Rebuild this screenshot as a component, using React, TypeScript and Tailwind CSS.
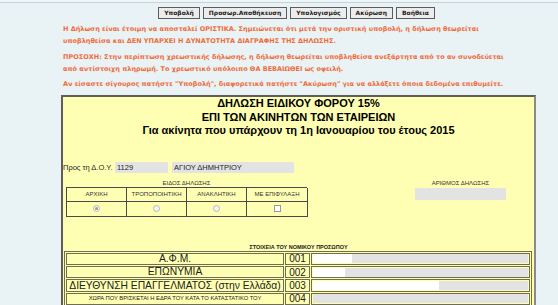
// Προεπισκόπηση οριστικής υποβολής δήλωσης ειδικού φόρου 15%

const sans = "font-['Liberation_Sans',Arial,sans-serif]";
const verdana = "font-['DejaVu_Sans',Verdana,sans-serif]";

const buttons = ['Υποβολή', 'Προσωρ.Αποθήκευση', 'Υπολογισμός', 'Ακύρωση', 'Βοήθεια'];

const kinds = ['ΑΡΧΙΚΗ', 'ΤΡΟΠΟΠΟΙΗΤΙΚΗ', 'ΑΝΑΚΛΗΤΙΚΗ', 'ΜΕ ΕΠΙΦΥΛΑΞΗ'];

const rows = [
  { label: 'Α.Φ.Μ.', code: '001', filled: 39, small: false },
  { label: 'ΕΠΩΝΥΜΙΑ', code: '002', filled: 32, small: false },
  { label: 'ΔΙΕΥΘΥΝΣΗ ΕΠΑΓΓΕΛΜΑΤΟΣ (στην Ελλάδα)', code: '003', filled: 126, small: false },
  { label: 'ΧΩΡΑ ΠΟΥ ΒΡΙΣΚΕΤΑΙ Η ΕΔΡΑ ΤΟΥ ΚΑΤΑ ΤΟ ΚΑΤΑΣΤΑΤΙΚΟ ΤΟΥ', code: '004', filled: 0, small: true },
];

function Radio({ checked }: { checked?: boolean }) {
  return (
    <span className="flex h-[7px] w-[7px] items-center justify-center rounded-full border border-[#b8b8b8] bg-[#f4f4f4]">
      {checked && <span className="h-[3px] w-[3px] rounded-full bg-[#9a9a9a]" />}
    </span>
  );
}

export default function App() {
  return (
    <div className="min-h-screen bg-[#e9f3f5]">
      <div className="h-[2px] bg-[#eef6f8]" />
      <div className="h-px bg-[#c4d3db]" />

      <div className="ml-[61px] w-[475px]">
        {/* κουμπιά ενεργειών */}
        <div className="mt-[4px] flex justify-center gap-[3px] pr-[4px]">
          {buttons.map((b) => (
            <button
              key={b}
              className={`${verdana} h-[12px] border border-[#5c5c5c] bg-[#ececec] px-[5px] text-[6px] font-bold leading-[10px] text-[#222]`}
            >
              {b}
            </button>
          ))}
        </div>

        {/* προειδοποιήσεις */}
        <div className={`${verdana} mt-[4px] pl-[2px] text-[6.5px] font-bold leading-[12px] text-[#ee6d3c]`}>
          <p>
            Η Δήλωση είναι έτοιμη να αποσταλεί ΟΡΙΣΤΙΚΑ. Σημειώνεται ότι μετά την οριστική υποβολή, η δήλωση θεωρείται
            <br />
            υποβληθείσα και ΔΕΝ ΥΠΑΡΧΕΙ Η ΔΥΝΑΤΟΤΗΤΑ ΔΙΑΓΡΑΦΗΣ ΤΗΣ ΔΗΛΩΣΗΣ.
          </p>
          <p className="mt-[4px]">
            ΠΡΟΣΟΧΗ: Στην περίπτωση χρεωστικής δήλωσης, η δήλωση θεωρείται υποβληθείσα ανεξάρτητα από το αν συνοδεύεται
            <br />
            από αντίστοιχη πληρωμή. Το χρεωστικό υπόλοιπο ΘΑ ΒΕΒΑΙΩΘΕΙ ως οφειλή.
          </p>
          <p className="mt-[3px]">
            Αν είσαστε σίγουρος πατήστε "Υποβολή", διαφορετικά πατήστε "Ακύρωση" για να αλλάξετε όποια δεδομένα επιθυμείτε.
          </p>
        </div>

        {/* φόρμα δήλωσης */}
        <div className="mt-[5px] h-[260px] border-2 border-[#5e5e5e] border-r-[#8a8a8a] bg-[#ffffb3]">
          <div className={`${sans} text-center text-[11px] font-bold leading-[13.5px] text-black`}>
            <div>ΔΗΛΩΣΗ ΕΙΔΙΚΟΥ ΦΟΡΟΥ 15%</div>
            <div>ΕΠΙ ΤΩΝ ΑΚΙΝΗΤΩΝ ΤΩΝ ΕΤΑΙΡΕΙΩΝ</div>
            <div>Για ακίνητα που υπάρχουν τη 1η Ιανουαρίου του έτους 2015</div>
          </div>

          <div className={`${sans} mt-[24px] flex items-center text-[7.5px] text-[#222]`}>
            <span className="w-[52px]">Προς τη Δ.Ο.Υ.</span>
            <span className="flex h-[11px] w-[53px] items-center bg-[#e3e3e3] px-[2px]">1129</span>
            <span className="ml-[4px] flex h-[11px] w-[122px] items-center bg-[#e3e3e3] px-[2px]">ΑΓΙΟΥ ΔΗΜΗΤΡΙΟΥ</span>
          </div>

          <div className={`${sans} mt-[6px] flex text-[6px] text-[#333]`}>
            <div className="ml-[3px] w-[241px]">
              <div className="text-center leading-[8px]">ΕΙΔΟΣ ΔΗΛΩΣΗΣ</div>
              <div className="grid grid-cols-[60px_60px_60px_61px] border-l border-t border-[#4a4a4a]">
                {kinds.map((k) => (
                  <div key={k} className="flex h-[14px] items-center justify-center border-b border-r border-[#4a4a4a]">
                    {k}
                  </div>
                ))}
                {kinds.map((k, i) => (
                  <div key={k + 'v'} className="flex h-[15px] items-center justify-center border-b border-r border-[#4a4a4a]">
                    {i === 3 ? (
                      <span className="h-[7px] w-[7px] border border-[#9a9a9a] bg-white" />
                    ) : (
                      <Radio checked={i === 0} />
                    )}
                  </div>
                ))}
              </div>
            </div>
            <div className="ml-[108px] w-[91px]">
              <div className="text-center leading-[8px]">ΑΡΙΘΜΟΣ ΔΗΛΩΣΗΣ</div>
              <div className="mt-[1px] h-[12px] bg-[#e3e3e3]" />
            </div>
          </div>

          <div className={`${sans} mt-[27px] text-center text-[5.5px] font-bold leading-[7px] text-[#222]`}>
            ΣΤΟΙΧΕΙΑ ΤΟΥ ΝΟΜΙΚΟΥ ΠΡΟΣΩΠΟΥ
          </div>

          <div className={`${sans} ml-[1px] mr-[2px] flex flex-col gap-[1px] border border-[#6f6f50] p-[1px] text-[#222]`}>
            {rows.map((r) => (
              <div key={r.code} className="flex gap-[1px]">
                <div
                  className={`flex h-[12.3px] w-[218px] items-center justify-center border border-[#6f6f50] ${
                    r.small ? 'text-[5.8px]' : 'text-[10.3px]'
                  }`}
                >
                  {r.label}
                </div>
                <div className="flex h-[12.3px] w-[25px] items-center justify-center border border-[#6f6f50] text-[10px]">
                  {r.code}
                </div>
                <div className="flex h-[12.3px] flex-1 items-center border border-[#6f6f50] px-[1px]">
                  <div className="flex h-[9px] flex-1 bg-[#e3e3e3]">
                    {r.filled > 0 && <div className="h-full bg-white" style={{ width: r.filled }} />}
                  </div>
                </div>
              </div>
            ))}
          </div>
        </div>
      </div>
    </div>
  );
}
